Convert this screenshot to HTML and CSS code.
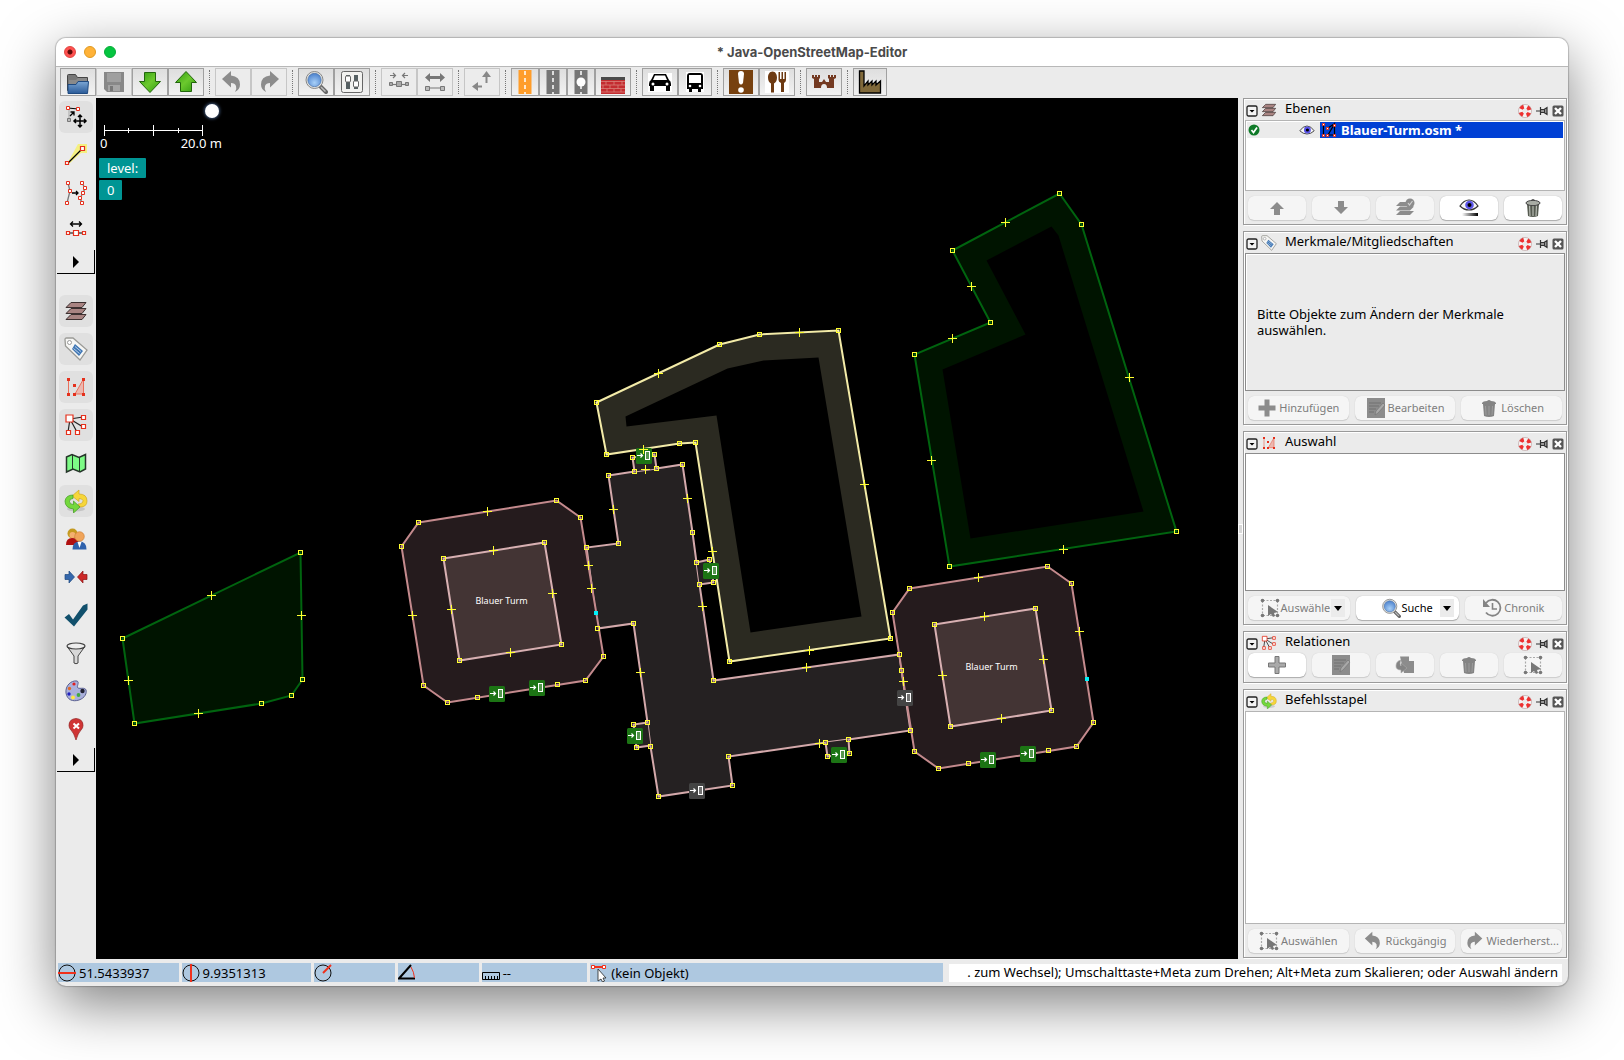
FILE: index.html
```html
<!DOCTYPE html>
<html lang="de">
<head>
<meta charset="utf-8">
<title>Java-OpenStreetMap-Editor</title>
<link rel="stylesheet" href="styles.css">
</head>
<body>
<svg class="sprite" aria-hidden="true">
  <defs>
    <linearGradient id="gBlue" x1="0" y1="0" x2="0" y2="1"><stop offset="0" stop-color="#7ba6d4"/><stop offset="1" stop-color="#2a5a98"/></linearGradient>
    <linearGradient id="gGreen" x1="0" y1="0" x2="1" y2="1"><stop offset="0" stop-color="#2f9a10"/><stop offset=".5" stop-color="#6cc92e"/><stop offset="1" stop-color="#2f9a10"/></linearGradient>
    <radialGradient id="gLens" cx=".5" cy=".7" r=".7"><stop offset="0" stop-color="#a8d0f8"/><stop offset="1" stop-color="#4a80cc"/></radialGradient>
    <linearGradient id="gBar"><stop offset="0" stop-color="#fff"/><stop offset="1" stop-color="#000"/></linearGradient>
    <marker id="node" markerUnits="userSpaceOnUse" markerWidth="6" markerHeight="6" refX="3" refY="3"><rect x="1" y="1" width="4" height="4" fill="none" stroke="#ffff30" stroke-width="1"/></marker>
    <marker id="cross" markerUnits="userSpaceOnUse" markerWidth="10" markerHeight="10" refX="5" refY="5"><path d="M.5 5h9M5 .5v9" stroke="#ffff30" stroke-width="1"/></marker>
  </defs>
  <symbol id="open" viewBox="0 0 24 24"><path d="M1.500 20.500V5.500q0-1 1-1h7l2 3h10v6z" fill="#777" stroke="#444"/><path d="M3 20V10h7l2-2h9v12z" fill="#8a8a8a"/><path d="M2 23.500 2 14.500h8l2-3h10.500l-1 12z" fill="url(#gBlue)" stroke="#1f4a80"/></symbol>
  <symbol id="save" viewBox="0 0 24 24"><path d="M2 2h20v20H5l-3-3z" fill="#888"/><path d="M5 3h14v9H5z" fill="#a0a0a0"/><path d="M6 15h12v6H6z" fill="#a5a5a5"/><path d="M8 16h3v5H8z" fill="#777"/></symbol>
  <symbol id="down" viewBox="0 0 24 24"><path d="M6.500 2.500h11v9h5L12 22.500 1.500 11.500h5z" fill="url(#gGreen)" stroke="#22660c"/></symbol>
  <symbol id="up" viewBox="0 0 24 24"><path d="M6.500 21.500h11v-9h5L12 1.500 1.500 12.500h5z" fill="url(#gGreen)" stroke="#22660c"/></symbol>
  <symbol id="undo" viewBox="0 0 24 24"><path d="M1 9 10 1v4.500q9 1 9 9 0 5-5 7.500 2-3 1-6-1-3-5-3v4.500z" fill="#8c8c8c"/></symbol>
  <symbol id="redo" viewBox="0 0 24 24"><path d="M22 9 13 1v4.500q-9 1-9 9 0 5 5 7.500-2-3-1-6 1-3 5-3v4.500z" fill="#8c8c8c"/></symbol>
  <symbol id="lens" viewBox="0 0 24 24"><path d="m16 16 6 6" stroke="#666" stroke-width="4" stroke-linecap="round"/><path d="m17 17 4.500 4.500" stroke="#bbb" stroke-width="1.500"/><circle cx="10.500" cy="10" r="8.500" fill="#e4e4e0" stroke="#888"/><circle cx="10.500" cy="10" r="6.700" fill="url(#gLens)" stroke="#4068a0" stroke-width=".6"/></symbol>
  <symbol id="prefs" viewBox="0 0 24 24"><rect x="1.500" y="1.500" width="21" height="21" rx="2" fill="#f2f2f0" stroke="#666"/><path d="M6 5h4v14H6zM14 5h4v14h-4z" fill="#566063"/><rect x="5.500" y="6" width="5" height="6" rx="1" fill="#fff" stroke="#666"/><rect x="13.500" y="11" width="5" height="6" rx="1" fill="#fff" stroke="#666"/></symbol>
  <symbol id="splitNode" viewBox="0 0 24 24"><g fill="none" stroke="#777" stroke-width="1.200"><path d="M3 5.500h5M6 3l2.500 2.500L6 8M21 5.500h-5M18 3l-2.500 2.500L18 8"/><path d="M4 14.500h16"/></g><g fill="#aaa" stroke="#777"><path d="M2.500 12.500h3v3h-3zM18.500 12.500h3v3h-3zM9.500 11.500h5v5h-5z"/></g></symbol>
  <symbol id="stretch" viewBox="0 0 24 24"><path d="M2 7.500 7 3v3h10V3l5 4.500L17 12V9H7v3z" fill="#777"/><path d="M4 18h16" stroke="#777"/><path d="M2.500 16.500h4v4h-4zM17.500 16.500h4v4h-4z" fill="#bbb" stroke="#777"/></symbol>
  <symbol id="ortho" viewBox="0 0 24 24"><path d="M15.500 13V7H12l4.500-6L21 7h-3.500v6zM12 17.500H8V21l-6-4.500L8 12v3.500h4z" fill="#888"/></symbol>
  <symbol id="motorway" viewBox="0 0 14 24"><path d="M.500 0h13v24H.500z" fill="#ff9d2a"/><path d="M7 1v23" stroke="#fff" stroke-width="1.500" stroke-dasharray="4 3"/></symbol>
  <symbol id="road" viewBox="0 0 14 24"><path d="M.500 0h13v24H.500z" fill="#757575"/><path d="M7 1v23" stroke="#fff" stroke-width="1.500" stroke-dasharray="4 3"/></symbol>
  <symbol id="roadDot" viewBox="0 0 14 24"><path d="M.500 0h13v24H.500z" fill="#757575"/><path d="M7 1v23" stroke="#fff" stroke-width="1.500" stroke-dasharray="4 3"/><circle cx="7" cy="12" r="4.500" fill="#fff"/></symbol>
  <symbol id="wall" viewBox="0 0 24 24"><path d="M0 7h24v3H0z" fill="#4a4a4a"/><path d="M0 10h24v14H0z" fill="#c42c30"/><path d="M0 11.500h24M0 15h24M0 18.500h24M0 22h24M5 11v4M13 11v4M21 11v4M2 15v4M9 15v4M17 15v4M6 19v3M13 19v3M20 19v3" stroke="#d88078" stroke-width=".8"/></symbol>
  <symbol id="car" viewBox="0 0 24 24"><path d="M0 3h24v19H0z" fill="#fff"/><path d="M6 4h12l3 6q2 1 2 4v2H1v-2q0-3 2-4z"/><path d="M7 5.500h10l2 4.500H5z" fill="#fff"/><path d="M2 16h4v5H2zM18 16h4v5h-4z"/><circle cx="5" cy="14" r="1.500" fill="#fff"/><circle cx="19" cy="14" r="1.500" fill="#fff"/></symbol>
  <symbol id="bus" viewBox="0 0 24 24"><path d="M3 2h18v20H3z" fill="#fff"/><path d="M7 3h10q3 0 3 3v13H4V6q0-3 3-3zM6 19h3v3H6zM15 19h3v3h-3z"/><path d="M6 5h12v8H6z" fill="#fff"/><circle cx="7" cy="16" r="1.300" fill="#fff"/><circle cx="17" cy="16" r="1.300" fill="#fff"/></symbol>
  <symbol id="info" viewBox="0 0 24 24"><path d="M0 0h24v24H0z" fill="#77410f"/><path d="M9 4q0-3 3-3t3 3l-1 9q-2 3-4 0z" fill="#fff"/><circle cx="12" cy="20" r="2.800" fill="#fff"/></symbol>
  <symbol id="food" viewBox="0 0 24 24"><path d="M0 1h24v22H0z" fill="#fff"/><path d="M7.500 1.500c3 0 4.500 3 4.500 6s-1 5-3 6v9H6v-9c-2-1-3-3-3-6s1.500-6 4.500-6zM13.500 2h1.500v7h1.500V2H18v7h1.500V2H21v8q0 2-2 3v9h-3v-9q-2.500-1-2.500-3z" fill="#6d3a12"/></symbol>
  <symbol id="castle" viewBox="0 0 24 24"><path d="M0 5h2v2h1V5h2v2h1V5h2v3L7 9v3h3l2-3 2 3h3V9l-1-1V5h2v2h1V5h2v2h1V5h2v3l-2 1v9H15q0-4-3-4t-3 4H2V9L0 8z" fill="#743a22"/></symbol>
  <symbol id="works" viewBox="0 0 24 24"><path d="M1.500 23V1h4.500v15l4-5v4l4-4v4l4-4v4l4.500-4v12z" fill="#80693a" stroke="#000" stroke-width="1.300"/></symbol>

  <symbol id="mSelect" viewBox="0 0 24 24"><path d="M5 3v12" stroke="#bbb" stroke-width="1.500"/><path d="M4 3l10 1" stroke="#000"/><path d="M2.500 1.500h3v3h-3zM12.500 2.500h3v3h-3z" fill="#fff" stroke="#e5301c"/><path d="M3.500 13.500h3v3h-3z" fill="#bbb" stroke="#777"/><path d="m6 11 4-4M6.500 7H10v3.500" stroke="#000" fill="none" stroke-width="1.300"/><path d="M16 10v12M10 16h12M14 12l2-2 2 2M14 20l2 2 2-2M12 14l-2 2 2 2M20 14l2 2-2 2" stroke="#000" stroke-width="1.500" fill="none"/></symbol>
  <symbol id="mDraw" viewBox="0 0 24 24"><path d="M14 1h9v9h-6L6 20l-3 1z" fill="#f4f080"/><path d="M3 21 18 6" stroke="#000" stroke-width="1.300"/><path d="M16.500 3.500h4v4h-4zM1.500 18.500h3v3h-3z" fill="#fff" stroke="#e5301c" stroke-width="1.200"/></symbol>
  <symbol id="mImprove" viewBox="0 0 24 24"><path d="M4 2l2 8-3 12M18 2l3 5-2 5-3 5 2 5" stroke="#777" stroke-width="1.300" fill="none"/><path d="M8 12h6M12 10l2 2-2 2" stroke="#000" fill="none" stroke-width="1.300"/><g fill="#fff" stroke="#e5301c"><path d="M2.500.500h3v3h-3zM4.500 8.500h3v3h-3zM1.500 20.500h3v3h-3zM16.500.500h3v3h-3zM19.500 5.500h3v3h-3zM17.500 10.500h3v3h-3zM14.500 15.500h3v3h-3zM16.500 20.500h3v3h-3z"/></g></symbol>
  <symbol id="mExtrude" viewBox="0 0 24 24"><path d="M7 5h10M9 2.500 6.500 5 9 7.500M15 2.500 17.500 5 15 7.500" stroke="#000" fill="none" stroke-width="1.300"/><path d="M4 14h16" stroke="#000"/><path d="M2.500 12.500h3v3h-3zM18.500 12.500h3v3h-3zM9.500 11.500h5v5h-5z" fill="#fff" stroke="#e5301c" stroke-width="1.200"/></symbol>

  <symbol id="layers" viewBox="0 0 24 24"><g fill="#a98482" stroke="#3c3030"><path d="M7 15.500h15l-4 5H2z"/><path d="M7 9.500h15l-4 5H2z"/><path d="M7 3.500h15l-4 5H2z"/></g></symbol>
  <symbol id="tag" viewBox="0 0 24 24"><path d="M1 2.500Q1 1 2.500 1H9l14 12-7 10L1.500 9z" fill="#f6f6f4" stroke="#9a9a96" stroke-width="1.300"/><circle cx="5.500" cy="5.500" r="2" fill="#fff" stroke="#999"/><path d="m11 7 8 7-4 5-7-7z" fill="#3f76b4"/><path d="m11 9.500 6 5M9.500 11.500l6 5" stroke="#d5e4f4" stroke-width=".8"/></symbol>
  <symbol id="sel" viewBox="0 0 24 24"><path d="M4.500 4v15M19.500 4v15H11z" stroke="#e8705c" fill="#ecb8b0"/><path d="M3 3h3v3H3zM3 18h3v3H3zM9 9h3v3H9zM9 18h3v3H9zM18 3h3v3h-3zM18 18h3v3h-3z" fill="#e5301c"/></symbol>
  <symbol id="rel" viewBox="0 0 24 24"><path d="M6 6 19 4M6 6l13 8M6 6l7 13M6 6 4 19" stroke="#222" stroke-width="1.200"/><g fill="#fff" stroke="#e5301c" stroke-width="1.200"><path d="M2 2h7v7H2zM17.500 2.500h4v4h-4zM17.500 11.500h4v4h-4zM2.500 17.500h4v4h-4zM11.500 17.500h4v4h-4z"/></g></symbol>
  <symbol id="mapIcon" viewBox="0 0 24 24"><path d="M2.500 6 8 3.500l7 3 6.500-3V18L16 21l-7-3-6.500 3z" fill="#7dfb86" stroke="#26352a" stroke-width="1.500"/><path d="M8.500 4v14M15.500 6v14" stroke="#26352a"/></symbol>
  <symbol id="cmd" viewBox="0 0 24 24"><ellipse cx="12" cy="20" rx="9" ry="2.500" fill="#000" opacity=".12"/><path d="M23 12q0 6-7 6l-2-3q5 0 5-3.500-1-2-4-2v3L8 7l7-6v4q8 0 8 7z" fill="#f6d63a" stroke="#d0a820" stroke-width=".7"/><path d="M1 12q1-6 8-6l0 3.500q-3.500 0-3.500 3 0 3 4 3v-3.500l6.500 6-6.500 6v-4Q1 19 1 12z" fill="#74d83c" stroke="#3f9a20" stroke-width=".7"/></symbol>
  <symbol id="users" viewBox="0 0 24 24"><circle cx="8.500" cy="6.500" r="5" fill="#c49a20"/><path d="M2 18q0-7 6-7t7 5v2z" fill="#b01010"/><circle cx="8.500" cy="8" r="3" fill="#f4b070"/><path d="M8.500 22.500q0-8 7-8t7 8z" fill="#2f62ac"/><path d="m13.500 15 2 6 2-6z" fill="#fff"/><circle cx="15.500" cy="9.500" r="4.800" fill="#f0a45a" stroke="#c87a30" stroke-width=".6"/></symbol>
  <symbol id="conflict" viewBox="0 0 24 24"><path d="M1 9.500h4V6l5.500 6L5 18v-3.500H1z" fill="#3568ac" stroke="#1d4880" stroke-width=".7"/><path d="M23 9.500h-4V6l-5.500 6 5.500 6v-3.500h4z" fill="#cc2828" stroke="#8a1414" stroke-width=".7"/></symbol>
  <symbol id="check" viewBox="0 0 24 24"><path d="M.5 14.500 5 11l4 5.500L19 2.500 23.500.5v6L10 23.500z" fill="#11506c"/></symbol>
  <symbol id="filter" viewBox="0 0 24 24"><path d="m3.500 6 6.500 9v7q2 1.500 4 0v-7l6.500-9z" fill="#d8d8d8" stroke="#444"/><ellipse cx="12" cy="5" rx="9" ry="3" fill="#eee" stroke="#444" stroke-width="1.200"/></symbol>
  <symbol id="paint" viewBox="0 0 24 24"><path d="M13 2C7 1 1 7 2 14s7 9 13 7 8-7 7-10-6-1-8-2 2-6-1-7z" fill="#aab0dc" stroke="#5a6090"/><circle cx="10" cy="5" r="1.600" fill="#e02020"/><circle cx="5.500" cy="9.500" r="1.700" fill="#e06a28"/><circle cx="5" cy="15" r="1.700" fill="#2020c0"/><circle cx="9" cy="18.500" r="1.900" fill="#ffe840"/><circle cx="14.500" cy="16" r="1.900" fill="#40a840"/><circle cx="18.500" cy="12" r="2.200" fill="#223"/></symbol>
  <symbol id="pin" viewBox="0 0 24 24"><path d="M12 23Q10 16 7 13 5 11 5 8.500q0-6.500 7-7 7 .5 7 7 0 2.500-2 4.500-3 3-5 10z" fill="#d03535" stroke="#902020" stroke-width=".7"/><path d="m9.500 6.500 5.500 5M15 6.500l-5.500 5" stroke="#fff" stroke-width="2"/></symbol>

  <symbol id="toggle" viewBox="0 0 12 12"><rect x="1" y="1" width="10" height="10" rx="1.500" fill="#f4f4f4" stroke="#222" stroke-width="1.300"/><path d="M3.500 5h5L6 7.500z"/></symbol>
  <symbol id="ring" viewBox="0 0 14 14"><circle cx="7" cy="7" r="4.700" fill="none" stroke="#f6f2f2" stroke-width="4"/><circle cx="7" cy="7" r="4.700" fill="none" stroke="#ee3030" stroke-width="4" stroke-dasharray="3.600 3.780" stroke-dashoffset="-1.900"/><circle cx="7" cy="7" r="6.600" fill="none" stroke="#b8a0a0" stroke-width=".6"/></symbol>
  <symbol id="pushpin" viewBox="0 0 12 12"><path d="M0 6h4.500M4.500 2v8M5 4.500h3l3-2v7l-3-2H5" fill="#999" stroke="#333" stroke-width="1.200"/><path d="M8.500 4v4" stroke="#333"/></symbol>
  <symbol id="close" viewBox="0 0 12 12"><rect x=".5" y=".5" width="11" height="11" rx="1.500" fill="#555"/><path d="m3 3 6 6M9 3 3 9" stroke="#fff" stroke-width="2.400"/></symbol>
  <symbol id="ok" viewBox="0 0 12 12"><circle cx="6" cy="6" r="5.500" fill="#0f7a28"/><path d="m3.500 6 2 2.500L9 3.500" stroke="#fff" stroke-width="1.700" fill="none"/></symbol>
  <symbol id="eye" viewBox="0 0 20 12"><path d="M1 7q4-6 9-6t9 6q-4 4-9 4T1 7z" fill="#f6f6f6" stroke="#444" stroke-width="1.200"/><circle cx="10.500" cy="6" r="4.300" fill="#5a54e8"/><circle cx="10.500" cy="6" r="2" fill="#000"/></symbol>
  <symbol id="eyeBar" viewBox="0 0 20 20"><path d="M1 8q4-6 9-6t9 6q-4 4-9 4T1 8z" fill="#f6f6f6" stroke="#333" stroke-width="1.200"/><circle cx="10.500" cy="7" r="4.300" fill="#5a54e8"/><circle cx="10.500" cy="7" r="2" fill="#000"/><path d="M3 15h16v3H3z" fill="url(#gBar)"/></symbol>
  <symbol id="dataLayer" viewBox="0 0 16 16"><path d="M2.500 2v11M13.500 2v11H7zM7 6l6-4" stroke="#000" fill="none" stroke-width="1.200"/><g fill="#fff" stroke="#e5301c"><path d="M1.500 1.500h2v2h-2zM1.500 12.500h2v2h-2zM5.500 5.500h2v2h-2zM5.500 12.500h2v2h-2zM12.500 2.500h2v2h-2zM12.500 12.500h2v2h-2z"/></g></symbol>
  <symbol id="gUp" viewBox="0 0 16 16"><path d="M5 15V9H1l7-7 7 7h-4v6z" fill="#8c8c8c"/></symbol>
  <symbol id="gDown" viewBox="0 0 16 16"><path d="M5 1v6H1l7 7 7-7h-4V1z" fill="#8c8c8c"/></symbol>
  <symbol id="gLayers" viewBox="0 0 20 20"><g fill="#8c8c8c"><path d="M5 13h14l-4 4H1zM5 8.500h14l-4 4H1zM5 4h14l-4 4H1z"/><circle cx="15" cy="5" r="4.500"/></g><path d="m13 5 1.500 2L17.500 3" stroke="#d0d0d0" fill="none" stroke-width="1.200"/></symbol>
  <symbol id="trash" viewBox="0 0 20 20"><path d="M4 6h12l-1 12q-5 2-10 0z" fill="#555a50"/><path d="M6.500 7l.5 11M10 7v11M13.500 7 13 18" stroke="#b8bcb4" stroke-width="1.200"/><ellipse cx="10" cy="5" rx="7" ry="2.600" fill="#a8aca4" stroke="#444"/><path d="M8 2.500q2-2 4 0" stroke="#444" fill="none"/></symbol>
  <symbol id="gTrash" viewBox="0 0 20 20"><path d="M4 6h12l-1 12q-5 2-10 0z" fill="#848484"/><path d="M6.500 8l.5 9M10 8v9M13.500 8 13 17" stroke="#9c9c9c"/><path d="M3 5q1-2 5-2 2-2 4 0 4 0 5 2v1H3z" fill="#848484"/></symbol>
  <symbol id="gPlus" viewBox="0 0 20 20"><path d="M7.500 1.500h5v6h6v5h-6v6h-5v-6h-6v-5h6z" fill="#8c8c8c"/></symbol>
  <symbol id="plus" viewBox="0 0 20 20"><path d="M8 1.500h4V8h6.500v4H12v6.500H8V12H1.500V8H8z" fill="#aaa" stroke="#777"/></symbol>
  <symbol id="gEdit" viewBox="0 0 20 20"><path d="M1 0h18v20H1z" fill="#8c8c8c"/><path d="M3 5h12M3 8h10M3 11h7M3 14h5" stroke="#707070"/><path d="m9 17 1-4 7-8 2 2-7 8z" fill="#a8a8a8" stroke="#707070" stroke-width=".6"/></symbol>
  <symbol id="gDup" viewBox="0 0 20 20"><path d="M5 1.500h9V6h5v12H9z" fill="#8c8c8c"/><path d="M6 5Q1 6 1 11q0 4 5 4v3l6-5-6-5v3Q4 9 6 5z" fill="#848484" stroke="#aaa" stroke-width=".6"/></symbol>
  <symbol id="gSel" viewBox="0 0 20 20"><path d="M3 2.500h14M3 17.500h14M2.500 3v14M17.500 3v14" stroke="#aaa" stroke-width="1.200" stroke-dasharray="2 1.500"/><g fill="#777"><circle cx="2.500" cy="2.500" r="1.800"/><circle cx="17.500" cy="2.500" r="1.800"/><circle cx="2.500" cy="17.500" r="1.800"/><circle cx="17.500" cy="17.500" r="1.800"/><path d="M8 7v11l3-2 2 3 2-1-1-3 4-1z"/></g></symbol>
  <symbol id="gHist" viewBox="0 0 20 20"><path d="M4 5a8 8 0 1 1 0 9.500" stroke="#848484" stroke-width="1.800" fill="none"/><path d="M1 1v8h7z" fill="#848484"/><path d="M10.500 5v6H15" stroke="#848484" stroke-width="1.600" fill="none"/></symbol>

  <symbol id="lat" viewBox="0 0 18 18"><circle cx="9" cy="9" r="8" fill="none" stroke="#111"/><path d="M0 9h18" stroke="#f0301c" stroke-width="2"/></symbol>
  <symbol id="lon" viewBox="0 0 18 18"><circle cx="9" cy="9" r="8" fill="none" stroke="#111"/><path d="M9 0v18" stroke="#f0301c" stroke-width="2"/></symbol>
  <symbol id="head" viewBox="0 0 18 18"><circle cx="9" cy="9" r="8" fill="none" stroke="#111"/><path d="m9 9 8-8" stroke="#f0301c" stroke-width="2"/></symbol>
  <symbol id="angle" viewBox="0 0 18 18"><path d="m13 1-12 13.500h16" stroke="#000" stroke-width="2" fill="none"/><path d="M13 3q3 5 3.500 11" stroke="#f0301c" fill="none"/></symbol>
  <symbol id="ruler" viewBox="0 0 18 18"><path d="M.5 8.500h17v7H.5zM3.500 15v-3M6.500 15v-3M9.500 15v-3M12.500 15v-3M15.500 15v-3" fill="none" stroke="#000"/></symbol>
  <symbol id="obj" viewBox="0 0 18 18"><path d="M4 3h9" stroke="#f0301c" stroke-width="2"/><path d="M1.500 1.500h3v3h-3zM12.500 1.500h3v3h-3z" fill="#fff" stroke="#f0301c"/><path d="M8 5v12l3-2 1.500 3 2-1-1.500-3h3z" fill="#fff" stroke="#222" stroke-width=".8"/></symbol>
  <symbol id="door" viewBox="0 0 16 16"><rect width="16" height="16" rx="1.500" fill="currentColor"/><path d="M1 7.500h5.500M4.500 5.500l2 2-2 2" stroke="#fff" fill="none" stroke-width="1.200"/><rect x="9.500" y="3.500" width="4" height="8" fill="#fff" fill-opacity=".25" stroke="#fff"/></symbol>
</svg>

<div class="window">
  <header class="titlebar">
    <div class="lights"><button class="light red" aria-label="Schließen"></button><button class="light amber" aria-label="Minimieren"></button><button class="light green" aria-label="Zoomen"></button></div>
    <h1>* Java-OpenStreetMap-Editor</h1>
  </header>

  <nav class="toolbar" aria-label="Werkzeugleiste">
    <button aria-label="Öffnen"><svg><use href="#open"/></svg></button><button class="dim" disabled aria-label="Speichern"><svg><use href="#save"/></svg></button><button aria-label="Herunterladen"><svg><use href="#down"/></svg></button><button aria-label="Hochladen"><svg><use href="#up"/></svg></button>
    <i></i>
    <button class="dim" disabled aria-label="Rückgängig"><svg><use href="#undo"/></svg></button><button class="dim" disabled aria-label="Wiederherstellen"><svg><use href="#redo"/></svg></button>
    <i></i>
    <button aria-label="Suchen"><svg><use href="#lens"/></svg></button><button aria-label="Einstellungen"><svg><use href="#prefs"/></svg></button>
    <i></i>
    <button class="dim" disabled aria-label="Linie teilen"><svg><use href="#splitNode"/></svg></button><button class="dim" disabled aria-label="Linien verbinden"><svg><use href="#stretch"/></svg></button>
    <i></i>
    <button class="dim" disabled aria-label="Rechtwinklig"><svg><use href="#ortho"/></svg></button>
    <i></i>
    <button class="slim" aria-label="Autobahn"><svg><use href="#motorway"/></svg></button><button class="slim" aria-label="Straße"><svg><use href="#road"/></svg></button><button class="slim" aria-label="Kreuzung"><svg><use href="#roadDot"/></svg></button><button aria-label="Mauer"><svg><use href="#wall"/></svg></button>
    <i></i>
    <button aria-label="Auto"><svg><use href="#car"/></svg></button><button class="mid" aria-label="Bus"><svg><use href="#bus"/></svg></button>
    <i></i>
    <button aria-label="Sehenswürdigkeit"><svg><use href="#info"/></svg></button><button aria-label="Restaurant"><svg><use href="#food"/></svg></button>
    <i></i>
    <button aria-label="Burg"><svg><use href="#castle"/></svg></button>
    <i></i>
    <button class="mid" aria-label="Fabrik"><svg><use href="#works"/></svg></button>
  </nav>

  <div class="work">
    <nav class="tools" aria-label="Modi und Fenster">
      <button class="on" aria-label="Auswählen"><svg><use href="#mSelect"/></svg></button>
      <button aria-label="Zeichnen"><svg><use href="#mDraw"/></svg></button>
      <button aria-label="Linie verbessern"><svg><use href="#mImprove"/></svg></button>
      <button aria-label="Extrudieren"><svg><use href="#mExtrude"/></svg></button>
      <button class="more" aria-label="Mehr Modi"></button>
      <div class="gap"></div>
      <button class="on" aria-label="Ebenen"><svg><use href="#layers"/></svg></button>
      <button class="on" aria-label="Merkmale"><svg><use href="#tag"/></svg></button>
      <button class="on" aria-label="Auswahl"><svg><use href="#sel"/></svg></button>
      <button class="on" aria-label="Relationen"><svg><use href="#rel"/></svg></button>
      <button aria-label="Übersichtskarte"><svg><use href="#mapIcon"/></svg></button>
      <button class="on" aria-label="Befehlsstapel"><svg><use href="#cmd"/></svg></button>
      <button aria-label="Autoren"><svg><use href="#users"/></svg></button>
      <button aria-label="Konflikte"><svg><use href="#conflict"/></svg></button>
      <button aria-label="Prüfung"><svg><use href="#check"/></svg></button>
      <button aria-label="Filter"><svg><use href="#filter"/></svg></button>
      <button aria-label="Kartenstile"><svg><use href="#paint"/></svg></button>
      <button aria-label="Hinweise"><svg><use href="#pin"/></svg></button>
      <button class="more" aria-label="Mehr Fenster"></button>
    </nav>

    <main class="map">
      <svg class="canvas" role="img" aria-label="Karte">
        <g transform="translate(-95.5 -97.5)">
          <g stroke="#00640f" stroke-width="2" fill="#001400">
            <path d="M122 638 300 552 302 679 291 695 261 703 134 723z"/>
            <path fill-rule="evenodd" stroke="none" d="M1059 193 1081 224 1176 531 949 566 914 354 990 322 952 250zM1051 226 1058 235 1143 511 970 538 942 369 1025 334 986 260z"/>
            <path fill="none" d="M1059 193 1081 224 1176 531 949 566 914 354 990 322 952 250z"/>
          </g>
          <path fill="#2b2a21" fill-rule="evenodd" d="M596 402 719 344 759 334 838 330 890 638 729 661 695 442 679 443 606 454zM625 416 727 368 763 360 818 357 861 616 750 632 716 415 626 426z"/>
          <g stroke="#d4a9ab" stroke-width="2" fill="#252122">
            <path d="M608 475 634 471 656 468 682 464 692 532 696 562 699 584 713 680 899 654 901 670 910 730 848 739 825 742 728 756 732 785 658 796 650 746 647 722 633 623 597 628 586 547 618 543z"/>
            <path d="M634 471 632 457 654 454 656 468M696 562 709 559 713 582 699 584M647 722 633 724 636 747 650 745M825 742 827 756 849 753 848 739"/>
          </g>
          <g stroke="#c48a8d" stroke-width="2" fill="#251b1d">
            <path d="M418 522 556 500 580 517 603 656 585 680 447 702 423 685 401 546z"/>
            <path d="M909 588 1047 566 1071 583 1093 722 1076 746 938 768 914 751 892 612z"/>
          </g>
          <g stroke="#d8b0b2" stroke-width="2" fill="#433434">
            <path d="M443 558 544 542 561 644 459 660z"/>
            <path d="M934 624 1035 608 1051 710 950 726z"/>
          </g>
          <path fill="none" stroke="#f3eba8" stroke-width="2" d="M596 402 719 344 759 334 838 330 890 638 729 661 695 442 679 443 606 454z"/>
          <g class="nodes">
            <path d="M122 638 300 552 302 679 291 695 261 703 134 723"/>
            <path d="M1059 193 1081 224 1176 531 949 566 914 354 990 322 952 250"/>
            <path d="M596 402 719 344 759 334 838 330 890 638 729 661 695 442 679 443 606 454"/>
            <path d="M608 475 634 471 656 468 682 464 692 532 696 562 699 584 713 680 899 654 901 670 910 730 848 739 825 742 728 756 732 785 658 796 650 746 647 722 633 623 597 628 586 547 618 543"/>
            <path d="M632 457 654 454 709 559 713 582 633 724 636 747 827 756 849 753"/>
            <path d="M418 522 556 500 580 517 603 656 585 680 557 684 477 697 447 702 423 685 401 546"/>
            <path d="M909 588 1047 566 1071 583 1093 722 1076 746 1048 750 968 763 938 768 914 751 892 612"/>
            <path d="M443 558 544 542 561 644 459 660"/>
            <path d="M934 624 1035 608 1051 710 950 726"/>
          </g>
          <g class="crosses">
            <path d="M211 595 301 615 198 713 128 680"/>
            <path d="M1005 222 1129 377 1063 549 931 460 952 338 971 286"/>
            <path d="M658 373 799 332 864 484 809 650 712 551"/>
            <path d="M613 509 645 469 687 498 702 606 640 672 806 667 903 681 819 743"/>
            <path d="M487 511 588 565 591 588 412 615 493 550 552 593 510 652 451 609"/>
            <path d="M978 577 1079 631 984 616 1043 659 1001 718 942 675"/>
          </g>
          <path d="M593.500 610.500h4v4h-4zM1084.500 676.500h4v4h-4z" fill="#00f0f8"/>
          <g color="#1c7414">
            <use href="#door" x="488.500" y="685.500" width="16" height="16"/><use href="#door" x="528.500" y="679.500" width="16" height="16"/>
            <use href="#door" x="635.500" y="447.500" width="16" height="16"/><use href="#door" x="702.500" y="562.500" width="16" height="16"/>
            <use href="#door" x="626.500" y="727.500" width="16" height="16"/><use href="#door" x="830.500" y="746.500" width="16" height="16"/>
            <use href="#door" x="979.500" y="751.500" width="16" height="16"/><use href="#door" x="1019.500" y="745.500" width="16" height="16"/>
          </g>
          <g color="#444"><use href="#door" x="688.500" y="782.500" width="16" height="16"/><use href="#door" x="896.500" y="689.500" width="16" height="16"/></g>
          <g class="crosses"><path d="M643 449 643 449"/></g>
          <g class="names"><text x="501" y="603">Blauer Turm</text><text x="991" y="669">Blauer Turm</text></g>
        </g>
      </svg>
      <div class="overlay">
        <input class="zoomer" type="range" min="0" max="10" value="10" aria-label="Zoomstufe">
        <svg class="scale" aria-hidden="true"><path d="M8.500 0v11M8.500 5.500h98M32.500 3v5M57.500 0v11M82.500 3v5M106.500 0v11" stroke="#fff" fill="none"/></svg>
        <div class="scaletext"><span>0</span><span>20.0 m</span></div>
        <span class="level">level:</span>
        <button class="level">0</button>
      </div>
    </main>

    <div class="divider"></div>

    <aside class="side">
      <section class="panel">
        <header><button aria-label="Einklappen"><svg class="s12"><use href="#toggle"/></svg></button><svg class="s16"><use href="#layers"/></svg><h2>Ebenen</h2><button aria-label="Hilfe"><svg class="s14"><use href="#ring"/></svg></button><button aria-label="Anheften"><svg class="s12"><use href="#pushpin"/></svg></button><button aria-label="Schließen"><svg class="s12"><use href="#close"/></svg></button></header>
        <div class="view layerview">
          <table><tr><td class="c1"><svg class="s12"><use href="#ok"/></svg></td><td class="c2"><svg class="eye"><use href="#eye"/></svg></td><td class="c3"><div class="layername"><svg class="s16"><use href="#dataLayer"/></svg>Blauer-Turm.osm *</div></td></tr></table>
        </div>
        <div class="actions">
          <button disabled aria-label="Nach oben"><svg class="s16"><use href="#gUp"/></svg></button><button disabled aria-label="Nach unten"><svg class="s16"><use href="#gDown"/></svg></button><button disabled aria-label="Aktivieren"><svg><use href="#gLayers"/></svg></button><button aria-label="Sichtbarkeit"><svg><use href="#eyeBar"/></svg></button><button aria-label="Löschen"><svg><use href="#trash"/></svg></button>
        </div>
      </section>

      <section class="panel">
        <header><button aria-label="Einklappen"><svg class="s12"><use href="#toggle"/></svg></button><svg class="s16"><use href="#tag"/></svg><h2>Merkmale/Mitgliedschaften</h2><button aria-label="Hilfe"><svg class="s14"><use href="#ring"/></svg></button><button aria-label="Anheften"><svg class="s12"><use href="#pushpin"/></svg></button><button aria-label="Schließen"><svg class="s12"><use href="#close"/></svg></button></header>
        <div class="view message"><p>Bitte Objekte zum Ändern der Merkmale auswählen.</p></div>
        <div class="actions">
          <button disabled><svg><use href="#gPlus"/></svg>Hinzufügen</button><button disabled><svg><use href="#gEdit"/></svg>Bearbeiten</button><button disabled><svg><use href="#gTrash"/></svg>Löschen</button>
        </div>
      </section>

      <section class="panel">
        <header><button aria-label="Einklappen"><svg class="s12"><use href="#toggle"/></svg></button><svg class="s16"><use href="#sel"/></svg><h2>Auswahl</h2><button aria-label="Hilfe"><svg class="s14"><use href="#ring"/></svg></button><button aria-label="Anheften"><svg class="s12"><use href="#pushpin"/></svg></button><button aria-label="Schließen"><svg class="s12"><use href="#close"/></svg></button></header>
        <div class="view list"></div>
        <div class="actions">
          <button disabled class="drop"><svg><use href="#gSel"/></svg>Auswähle<span class="arrow"></span></button><button class="drop"><svg><use href="#lens"/></svg>Suche<span class="arrow far"></span></button><button disabled><svg><use href="#gHist"/></svg>Chronik</button>
        </div>
      </section>

      <section class="panel">
        <header><button aria-label="Einklappen"><svg class="s12"><use href="#toggle"/></svg></button><svg class="s16"><use href="#rel"/></svg><h2>Relationen</h2><button aria-label="Hilfe"><svg class="s14"><use href="#ring"/></svg></button><button aria-label="Anheften"><svg class="s12"><use href="#pushpin"/></svg></button><button aria-label="Schließen"><svg class="s12"><use href="#close"/></svg></button></header>
        <div class="actions tight">
          <button aria-label="Neu"><svg><use href="#plus"/></svg></button><button disabled aria-label="Bearbeiten"><svg><use href="#gEdit"/></svg></button><button disabled aria-label="Duplizieren"><svg><use href="#gDup"/></svg></button><button disabled aria-label="Löschen"><svg><use href="#gTrash"/></svg></button><button disabled aria-label="Auswählen"><svg><use href="#gSel"/></svg></button>
        </div>
      </section>

      <section class="panel grow">
        <header><button aria-label="Einklappen"><svg class="s12"><use href="#toggle"/></svg></button><svg class="s16"><use href="#cmd"/></svg><h2>Befehlsstapel</h2><button aria-label="Hilfe"><svg class="s14"><use href="#ring"/></svg></button><button aria-label="Anheften"><svg class="s12"><use href="#pushpin"/></svg></button><button aria-label="Schließen"><svg class="s12"><use href="#close"/></svg></button></header>
        <div class="view list"></div>
        <div class="actions">
          <button disabled><svg><use href="#gSel"/></svg>Auswählen</button><button disabled><svg><use href="#undo"/></svg>Rückgängig</button><button disabled><svg><use href="#redo"/></svg>Wiederherst...</button>
        </div>
      </section>
    </aside>
  </div>

  <footer class="status">
    <div class="cell lat"><svg><use href="#lat"/></svg>51.5433937</div>
    <div class="cell lon"><svg><use href="#lon"/></svg>9.9351313</div>
    <div class="cell head"><svg><use href="#head"/></svg></div>
    <div class="cell head"><svg><use href="#angle"/></svg></div>
    <div class="cell dist"><svg><use href="#ruler"/></svg>--</div>
    <div class="cell object"><svg><use href="#obj"/></svg>(kein Objekt)</div>
    <div class="help"><span>. zum Wechsel); Umschalttaste+Meta zum Drehen; Alt+Meta zum Skalieren; oder Auswahl ändern</span></div>
  </footer>
</div>
</body>
</html>
```
FILE: styles.css
```css
* { box-sizing: border-box; }
html { height: 100%; background: #fff; }
body {
  margin: 0;
  min-height: 100vh;
  padding: 38px 56px 74px;
  display: flex;
  overflow: hidden;
  font: 13px/16px "Noto Sans", sans-serif;
  color: #000;
}
button { font: inherit; border: 0; padding: 0; background: none; color: inherit; }
h1, h2, p { margin: 0; }
svg { display: block; flex: none; }
.sprite { position: absolute; width: 0; height: 0; }

.window {
  flex: 1;
  min-width: 0;
  display: flex;
  flex-direction: column;
  background: #ebebeb;
  border-radius: 10px;
  box-shadow: 0 0 1px 1px rgba(0,0,0,.2), 0 18px 56px rgba(0,0,0,.5);
}
.titlebar {
  height: 29px;
  display: grid;
  grid-template-columns: 1fr auto 1fr;
  align-items: center;
  padding: 0 8px;
  background: #fff;
  border-bottom: 1px solid #b8b8b8;
  border-radius: 10px 10px 0 0;
}
.titlebar h1 { font: 700 13px/16px Inter, sans-serif; color: #4a4a4a; }
.lights { display: flex; gap: 8px; }
.light { width: 12px; height: 12px; border-radius: 6px; }
.red { background: radial-gradient(circle, #5c0a08 2px, #ff5150 3px); border: 1px solid #e0443e; }
.amber { background: #ffb238; border: 1px solid #e09a20; }
.green { background: #05c540; border: 1px solid #08ac38; }

.toolbar { height: 31px; display: flex; align-items: flex-start; padding: 1px 4px 0; }
.toolbar button {
  width: 36px; height: 28px;
  display: flex; align-items: center; justify-content: center;
  border: 1px solid #a0a0a0;
  background: linear-gradient(#dedede, #f2f2f2);
}
.toolbar .dim { border-color: #c6c6c6; background: #ececec; }
.toolbar .slim { width: 28px; }
.toolbar .mid { width: 34px; }
.toolbar svg { width: 24px; height: 24px; }
.toolbar i { width: 1px; height: 24px; margin: 2px 5px; border-left: 1px dotted #777; }

.work { flex: 1; min-height: 0; display: flex; }
.tools { width: 40px; display: flex; flex-direction: column; align-items: center; }
.tools button { width: 34px; height: 32px; margin: 3px 0; border-radius: 6px; display: flex; align-items: center; justify-content: center; }
.tools .on { background: #e0e0e0; }
.tools svg { width: 24px; height: 24px; }
.tools .more { width: 38px; height: 24px; margin: 0; border-radius: 0; border-right: 1px solid #000; border-bottom: 1px solid #000; }
.more::after { content: ""; border-left: 6px solid #000; border-top: 6px solid transparent; border-bottom: 6px solid transparent; }
.gap { height: 18px; }

.map { flex: 1; min-width: 0; position: relative; overflow: hidden; background: #000; }
.canvas { position: absolute; inset: 0; width: 100%; height: 100%; }
.nodes path, .crosses path { fill: none; stroke: none; }
.nodes path { marker: url(#node); }
.crosses path { marker: url(#cross); }
.names { font-size: 9px; fill: #fff; text-anchor: middle; }
.overlay { position: relative; width: 126px; padding: 5px 0 0 3px; color: #fff; }
.zoomer { display: block; appearance: none; width: 120px; height: 16px; margin: 0; background: none; }
.zoomer::-webkit-slider-thumb { appearance: none; width: 14px; height: 14px; border-radius: 7px; background: #fff; box-shadow: 0 0 3px 1px #3a5070; }
.scale { width: 120px; height: 11px; margin: 6px 0 0 -3px; }
.scaletext { display: flex; justify-content: space-between; padding: 0 0 0 1px; line-height: 14px; }
.level { display: block; width: fit-content; height: 20px; padding: 0 8px; margin-top: 2px; line-height: 20px; background: #009594; border-radius: 1px; }
.scaletext + .level { margin-top: 8px; }

.divider { width: 5px; display: flex; align-items: center; justify-content: center; }
.divider::after { content: ""; width: 5px; height: 8px; border: 1px solid #fff; background: #d8d8d8; }

.side { width: 325px; display: flex; flex-direction: column; gap: 6px; padding-bottom: 1px; }
.panel { border: 1px solid #9a9a9a; display: flex; flex-direction: column; margin-right: 1px; box-shadow: inset 1px 1px 0 #fff, 1px 1px 0 #fff; }
.grow { flex: 1; min-height: 0; }
.panel header { height: 21px; display: flex; align-items: center; padding: 0 2px; gap: 4px; }
.panel header > .s16 { margin-left: -1px; }
.panel h2 { flex: 1; font: inherit; line-height: 18px; align-self: flex-start; padding-left: 4px; }
.panel header button { margin-top: 2px; }
.s12 { width: 12px; height: 12px; }
.s14 { width: 14px; height: 14px; }
.s16 { width: 16px; height: 16px; }
.eye { width: 16px; height: 12px; }
.view { margin: 0 1px; border: 1px solid #8c8c8c; }
.layerview { height: 71px; background: #fff; border-color: #b4b4b4; padding: 1px; }
.layerview table { width: 100%; border-spacing: 0; background: #ebebeb; }
.layerview td { padding: 0; height: 16px; }
.c1 { width: 52px; }
.c1 svg { margin-left: 1px; }
.c2 { width: 21px; }
.layername { display: flex; gap: 4px; padding-left: 1px; height: 16px; line-height: 16px; background: #0040d4; color: #fff; font-weight: 700; }
.message { height: 138px; display: flex; align-items: center; padding: 0 11px; box-shadow: inset 1px 1px 0 #fff; }
.list { height: 138px; background: #fff; }
.grow .list { flex: 1; height: auto; border-color: #b4b4b4; }
.actions { display: flex; gap: 6px; padding: 5px 4px 4px; }
.tight { padding: 0 4px 5px; }
.actions button {
  flex: 1 1 0; min-width: 0; height: 24px;
  display: flex; align-items: center; justify-content: center; gap: 2px;
  border-radius: 6px;
  background: #fff;
  font-size: 11px;
  white-space: nowrap;
  box-shadow: 0 0 1px rgba(0,0,0,.3), 0 1px 1px rgba(0,0,0,.25);
}
.actions button:disabled { background: #f5f5f5; color: #7d7d7d; box-shadow: 0 0 1px rgba(0,0,0,.15), 0 1px 1px rgba(0,0,0,.12); }
.actions svg { width: 20px; height: 20px; }
.actions .s16 { width: 16px; height: 16px; }
.arrow { width: 14px; height: 18px; background: #ebebeb; display: flex; align-items: center; justify-content: center; }
.arrow::after { content: ""; border-top: 5px solid #000; border-left: 4px solid transparent; border-right: 4px solid transparent; }
.far { margin-left: 6px; }
.actions .drop { justify-content: flex-end; padding-right: 5px; gap: 1px; }

.status { height: 27px; display: flex; gap: 3px; padding: 4px 6px 4px 2px; }
.cell { height: 19px; display: flex; align-items: center; gap: 3px; background: #aec8e0; white-space: nowrap; flex: 81 1 0; min-width: 0; }
.cell svg { width: 18px; height: 18px; }
.lat { flex-grow: 121; }
.lon { flex-grow: 130; }
.dist { flex-grow: 106; }
.object { flex-grow: 354; }
.help { flex: 611 1 0; min-width: 0; height: 18px; margin: 1px 0 0 3px; padding-right: 4px; background: #fff; overflow: hidden; white-space: nowrap; line-height: 17px; display: flex; justify-content: flex-end; }
```
